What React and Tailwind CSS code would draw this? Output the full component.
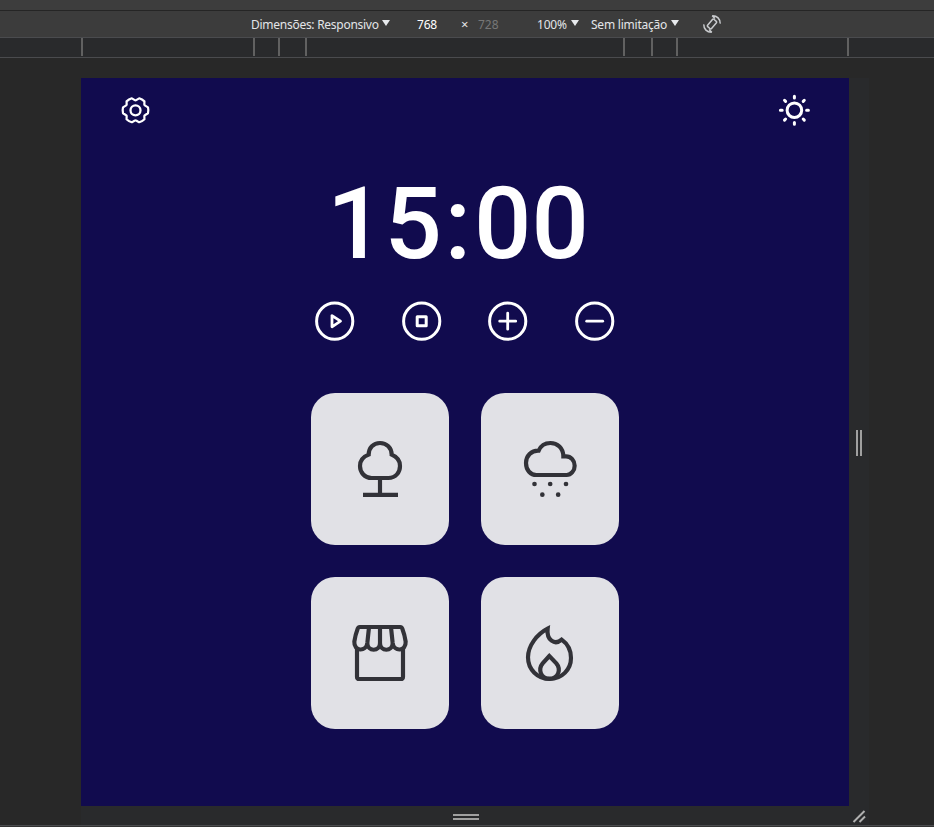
import React from "react";

const ticks = [
  "ml-[81px]",
  "ml-[170px]",
  "ml-[23px]",
  "ml-[25px]",
  "ml-[316px]",
  "ml-[26px]",
  "ml-[23px]",
  "ml-[169px]",
];

function Caret({ className }) {
  return (
    <svg className={className} width="8" height="6" viewBox="0 0 8 6">
      <path d="M0 0H8L4 6Z" fill="#e8eaed" />
    </svg>
  );
}

function RotateIcon() {
  return (
    <svg width="20" height="20" viewBox="0 0 20 20" fill="none" stroke="#c9cbce" strokeWidth="1.5">
      <rect x="7.4" y="5.2" width="5.2" height="9.6" rx="1" transform="rotate(40 10 10)" />
      <path d="M10.2 1.7C15 1.5 18.4 5 18.2 9.6M10.2 1.7l2.8 2.8M9.8 18.3C5 18.5 1.6 15 1.8 10.4M9.8 18.3l-2.8-2.8" />
    </svg>
  );
}

function Toolbar() {
  return (
    <div className="flex h-[26px] items-center bg-[#3c3c3c] text-[12px] text-[#e3e5e8]">
      <span className="ml-[251px] w-[131px] whitespace-nowrap pt-[2px] tracking-[-0.27px]">Dimensões: Responsivo</span>
      <Caret className="mb-[3px] shrink-0" />
      <span className="ml-[27px] w-[44px] pt-[2px] tracking-[-0.2px] text-white">768</span>
      <span className="w-[17px] pt-[2px] text-[13px]">×</span>
      <span className="w-[59px] pt-[2px] text-[#777]">728</span>
      <span className="w-[34px] pt-[2px] tracking-[-0.2px]">100%</span>
      <Caret className="mb-[3px] shrink-0" />
      <span className="ml-[12px] w-[80px] whitespace-nowrap pt-[2px] tracking-[-0.22px]">Sem limitação</span>
      <Caret className="mb-[3px] shrink-0" />
      <span className="ml-[23px]">
        <RotateIcon />
      </span>
    </div>
  );
}

function Ruler() {
  return (
    <div className="flex h-[21px] border-y border-[#4a4b4e] bg-[#292a2c]">
      {ticks.map((m, i) => (
        <div key={i} className={`h-[18px] w-[2px] shrink-0 bg-[#616161] ${m}`} />
      ))}
    </div>
  );
}

function GearIcon() {
  return (
    <svg width="30" height="30" viewBox="-15.500 -16.300 30 30" fill="none" stroke="#fff" strokeWidth="2.3" strokeLinejoin="round">
      <circle r="5" />
      <path
        transform="scale(0.96 0.93)"
        d="M13 -3.200Q13.800 0 13 3.200L9.700 5.300Q9.200 5.600 9.200 6.200L9.300 9.600Q7 11.900 3.800 12.900L0.700 11Q0 10.500 -0.700 11L-3.800 12.900Q-7 11.900 -9.300 9.600L-9.200 6.200Q-9.200 5.600 -9.700 5.300L-13 3.200Q-13.800 0 -13 -3.200L-9.700 -5.300Q-9.200 -5.600 -9.200 -6.200L-9.300 -9.600Q-7 -11.900 -3.800 -12.900L-0.700 -11Q0 -10.500 0.700 -11L3.800 -12.900Q7 -11.900 9.300 -9.600L9.200 -6.200Q9.200 -5.600 9.700 -5.300Z"
      />
    </svg>
  );
}

function SunIcon() {
  return (
    <svg width="32" height="32" viewBox="-16.400 -16.200 32 32" fill="none" stroke="#fff" strokeWidth="3" strokeLinecap="round">
      <circle r="7.3" />
      <path d="M0 -14V-12.200M0 12.200V14M-14 0H-12.200M12.200 0H14M-9.900 -9.900L-8.800 -8.800M9.900 -9.900L8.800 -8.800M-9.900 9.900L-8.800 8.800M9.900 9.900L8.800 8.800" />
    </svg>
  );
}

function ControlButton({ children }) {
  return (
    <button className="size-10">
      <svg width="40" height="40" viewBox="-19.700 -20.200 40 40" fill="none" stroke="#fff" strokeWidth="3" strokeLinecap="round">
        <circle r="18.1" />
        {children}
      </svg>
    </button>
  );
}

function SoundCard({ viewBox, children }) {
  return (
    <button className="flex h-[152px] w-[138px] items-center justify-center rounded-3xl bg-[#e1e1e6]">
      <svg width="60" height="60" viewBox={viewBox} fill="none" stroke="#323238" strokeWidth="12.5">
        {children}
      </svg>
    </button>
  );
}

function Timer() {
  return (
    <div className="flex h-[728px] w-[768px] shrink-0 flex-col items-center bg-[#110b4e]">
      <header className="flex w-full justify-between pl-[39px] pr-[39px] pt-4">
        <GearIcon />
        <SunIcon />
      </header>
      <div className="mt-[37px] flex h-[120px] w-[768px] items-center whitespace-nowrap pl-[246px] text-[101px] font-medium leading-none text-white [font-family:Roboto,sans-serif]">
        <span className="w-[117.5px]">15</span>
        <span className="w-[29.5px]">:</span>
        <span>00</span>
      </div>
      <div className="mt-[18px] flex gap-[46.7px]">
        <ControlButton>
          <path d="M-2.700 -5.600V5.600L5.800 0Z" strokeWidth="2.8" strokeLinejoin="round" />
        </ControlButton>
        <ControlButton>
          <rect x="-4.5" y="-4.5" width="9" height="9" strokeLinejoin="round" />
        </ControlButton>
        <ControlButton>
          <path d="M-8 0H8M0 -8V8" strokeWidth="2.8" />
        </ControlButton>
        <ControlButton>
          <path d="M-8 0H8" strokeWidth="2.8" />
        </ControlButton>
      </div>
      <div className="mt-[52px] grid grid-cols-2 gap-8">
        <SoundCard viewBox="150 177 180 180">
          <path d="M215 294H265C288 294 300 276 300 258C300 243 290 230 275 224C275 203 260 189 240 189C220 189 206 203 206 224C190 230 180 243 180 258C180 276 193 294 215 294Z" />
          <path d="M240 294V344M189 344.500H294" />
        </SoundCard>
        <SoundCard viewBox="150 177 180 180">
          <path d="M199 285H290C303 285 314 272 314 257S303 229 288 229L280 229C280 204 262 189 241 189C225 189 212 198 206 212C184 211 168 228 168 249C168 271 182 285 199 285Z" />
          <g fill="#323238" stroke="none">
            <circle cx="193.500" cy="312" r="7" />
            <circle cx="240.500" cy="312" r="7" />
            <circle cx="288" cy="312" r="7" />
            <circle cx="217" cy="344" r="7" />
            <circle cx="264.500" cy="344" r="7" />
          </g>
        </SoundCard>
        <SoundCard viewBox="150 159 180 180">
          <path d="M171 236V320Q171 327 178 327H302Q309 327 309 320V236" />
          <path
            d="M179 171H301Q305 171 307 176Q314 194 317 215C319 245 281 246 278 219C278 246 240 246 240 219C240 246 202 246 202 219C199 246 161 245 163 215Q166 194 173 176Q175 171 179 171ZM207 172L202 219M240 172V219M273 172L278 219"
            strokeLinejoin="round"
          />
        </SoundCard>
        <SoundCard viewBox="150 159 180 180">
          <path d="M233 176C200 193 174 228 174 262C174 299 203 327 239 327C275 327 303 299 303 264C303 240 292 221 275 209C254 227 229 210 233 176Z" />
          <path d="M238 258L218 280C204 297 211 326 238 326C267 326 273 297 259 280Z" />
        </SoundCard>
      </div>
    </div>
  );
}

export default function App() {
  return (
    <div className="flex h-[827px] w-[934px] flex-col overflow-hidden bg-[#282828] [font-family:'Noto_Sans','Open_Sans',sans-serif]">
      <div className="h-[11px] shrink-0 border-b border-[#252525] bg-[#3d3d3d]" />
      <Toolbar />
      <Ruler />
      <div className="flex h-[768px] shrink-0 flex-col border-b border-[#4a4b4e] pl-[81px] pt-5">
        <div className="flex">
          <Timer />
          <div className="flex w-5 items-center justify-center gap-[2px] bg-[#292a2c] pt-[2px]">
            <div className="h-[26px] w-[2px] bg-[#a0a0a0]" />
            <div className="h-[26px] w-[2px] bg-[#a0a0a0]" />
          </div>
        </div>
        <div className="flex flex-1 w-[788px] items-center bg-[#292a2c] pt-[3px]">
          <div className="ml-[372px] flex w-[26px] flex-col gap-[2px]">
            <div className="h-[2px] bg-[#a0a0a0]" />
            <div className="h-[2px] bg-[#a0a0a0]" />
          </div>
          <svg className="ml-[373px]" width="15" height="14" viewBox="0 0.500 15 14" stroke="#b0b0b0" strokeWidth="2">
            <path d="M1.500 12.500L12.500 1.500M7.500 12.500L13 7" />
          </svg>
        </div>
      </div>
      <div className="flex-1 bg-[#333]" />
    </div>
  );
}
